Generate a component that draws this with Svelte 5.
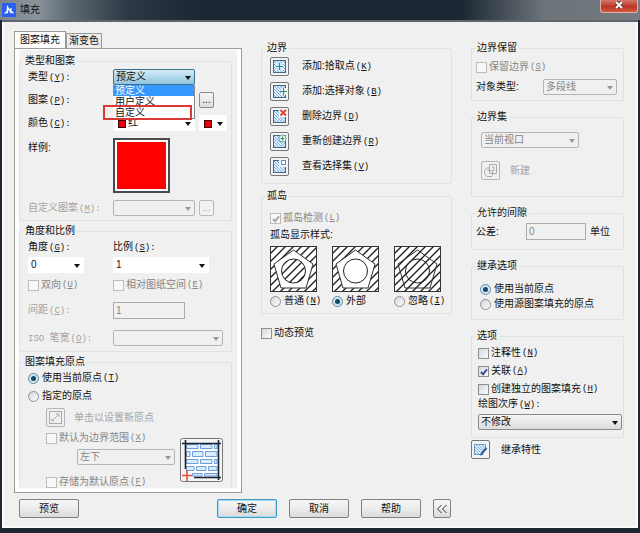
<script lang="ts">
  let patternType = $state('预定义')
  let preview = $state(false)
  let originMode = $state('current')
  let inheritMode = $state('current')
  let island = $state('outer')
  let drawOrder = $state('不修改')
  let annotative = $state(false)
  let associative = $state(true)
  let separate = $state(false)

  const patternTypes = ['预定义', '用户定义', '自定义']

  const boundaryTools = [
    { id: 'pick', label: '添加:拾取点', key: 'K' },
    { id: 'select', label: '添加:选择对象', key: 'B' },
    { id: 'remove', label: '删除边界', key: 'D' },
    { id: 'recreate', label: '重新创建边界', key: 'R' },
    { id: 'view', label: '查看选择集', key: 'V' },
  ]

  const islandStyles = [
    { id: 'normal', label: '普通', key: 'N' },
    { id: 'outer', label: '外部', key: '' },
    { id: 'ignore', label: '忽略', key: 'I' },
  ]
</script>

{#snippet key(k: string, colon = false)}<span class="key">(<u>{k}</u>){colon ? ':' : ''}</span>{/snippet}

<svg class="defs" width="0" height="0" aria-hidden="true">
  <defs>
    <pattern id="hatch" width="8" height="8" patternUnits="userSpaceOnUse">
      <path d="M-2 2L2 -2M-2 10L10 -2M6 10L10 6" stroke="#222" stroke-width="1.4" />
    </pattern>
    <pattern id="fine" width="3" height="3" patternUnits="userSpaceOnUse">
      <rect width="3" height="3" fill="#e2f0fc" />
      <path d="M0 0L3 3" stroke="#6fa3dc" stroke-width="0.9" />
    </pattern>
  </defs>
</svg>

<div class="window">
  <header class="titlebar">
    <svg class="logo" width="14" height="14" viewBox="0 0 14 14">
      <rect width="14" height="14" rx="1" fill="#2a5ff0" />
      <path d="M3 10L5.5 9.500V4L9 9.500L11.500 9.500M9 9V5" fill="none" stroke="#fff" stroke-width="1.300" />
      <path d="M2.500 10.500L5 7" stroke="#bcd0ff" />
    </svg>
    <h1>填充</h1>
    <button class="close" aria-label="关闭">
      <svg width="10" height="8" viewBox="0 0 10 8">
        <path d="M2 1L8 7M8 1L2 7" stroke="#5b2a26" stroke-width="3.400" />
        <path d="M2 1L8 7M8 1L2 7" stroke="#fff" stroke-width="2" />
      </svg>
    </button>
  </header>

  <div class="client">
    <main class="columns">
      <section class="left">
        <div class="tabs" role="tablist">
          <button class="tab active" role="tab" aria-selected="true">图案填充</button>
          <button class="tab" role="tab" aria-selected="false">渐变色</button>
        </div>
        <div class="page" role="tabpanel">
          <div class="sheet">
            <fieldset class="group pattern">
              <legend>类型和图案</legend>
              <div class="row">
                <label class="name" for="type">类型{@render key('Y', true)}</label>
                <div class="combo open w82">
                  <select id="type" bind:value={patternType}>
                    {#each patternTypes as t}<option>{t}</option>{/each}
                  </select>
                  <ul class="list">
                    {#each patternTypes as t}
                      <li class:chosen={t === patternType}>{t}</li>
                    {/each}
                  </ul>
                  <span class="mark"></span>
                </div>
              </div>
              <div class="row">
                <span class="name">图案{@render key('P', true)}</span>
                <div class="w82"></div>
                <button class="more" aria-label="图案">...</button>
              </div>
              <div class="row">
                <label class="name" for="color">颜色{@render key('C', true)}</label>
                <div class="combo plain chip w82">
                  <select id="color"><option>红</option></select>
                </div>
                <div class="combo plain chip w28">
                  <select aria-label="背景色"><option></option></select>
                </div>
              </div>
              <div class="row top">
                <span class="name sample">样例:</span>
                <button class="swatch" aria-label="样例"></button>
              </div>
              <div class="row">
                <label class="name dim" for="custom">自定义图案{@render key('M', true)}</label>
                <div class="combo w82">
                  <select id="custom" disabled><option></option></select>
                </div>
                <button class="more" disabled aria-label="自定义图案">...</button>
              </div>
            </fieldset>

            <fieldset class="group scale">
              <legend>角度和比例</legend>
              <div class="tight">
                <div class="pair">
                  <div class="field">
                    <label for="angle">角度{@render key('G', true)}</label>
                    <div class="combo plain w56">
                      <select id="angle"><option>0</option></select>
                    </div>
                  </div>
                  <div class="field">
                    <label for="ratio">比例{@render key('S', true)}</label>
                    <div class="combo plain w96">
                      <select id="ratio"><option>1</option></select>
                    </div>
                  </div>
                </div>
                <div class="pair">
                  <label class="check off"><input type="checkbox" disabled />双向{@render key('U')}</label>
                  <label class="check off"><input type="checkbox" disabled />相对图纸空间{@render key('E')}</label>
                </div>
              </div>
              <div class="row">
                <label class="name dim" for="spacing">间距{@render key('C', true)}</label>
                <input class="text w72" id="spacing" value="1" disabled />
              </div>
              <div class="row">
                <label class="name dim" for="iso"><span class="mono">ISO{' '}</span>笔宽{@render key('O', true)}</label>
                <div class="combo w110">
                  <select id="iso" disabled><option></option></select>
                </div>
              </div>
            </fieldset>

            <fieldset class="group origin">
              <legend>图案填充原点</legend>
              <label class="check"><input type="radio" value="current" bind:group={originMode} />使用当前原点{@render key('T')}</label>
              <label class="check"><input type="radio" value="custom" bind:group={originMode} />指定的原点</label>
              <div class="sub">
                <div class="substack">
                  <div class="tool dim">
                    <button class="icon" id="setorigin" disabled aria-label="设置新原点">
                      <svg width="13" height="13" viewBox="0 0 13 13" fill="none" stroke="#aaa">
                        <rect x="0.500" y="0.500" width="12" height="12" />
                        <path d="M3 10L10 3M7 3H10V6M2 8L5 11M3 10V8" />
                      </svg>
                    </button>
                    <label for="setorigin">单击以设置新原点</label>
                  </div>
                  <label class="check off"><input type="checkbox" disabled />默认为边界范围{@render key('X')}</label>
                  <div class="combo corner w98">
                    <select disabled aria-label="边界范围"><option>左下</option></select>
                  </div>
                  <label class="check off store"><input type="checkbox" disabled />存储为默认原点{@render key('F')}</label>
                </div>
                <svg class="bricks" width="43" height="44" viewBox="0 0 43 44">
                  <rect x="0.500" y="0.500" width="42" height="43" rx="2" fill="#f4f4f4" stroke="#777" />
                  <rect x="6" y="6" width="31" height="32" fill="#fff" />
                  <g fill="#dcebfa" stroke="#6b9ede">
                    <path d="M6.500 6.500H18V10.500H6.500ZM20.500 6.500H32V10.500H20.500ZM34.500 6.500H37V10.500H34.500Z" />
                    <path d="M6.500 13.500H10V18.500H6.500ZM12.500 13.500H23V18.500H12.500ZM25.500 13.500H37V18.500H25.500Z" />
                    <path d="M6.500 21.500H18V25.500H6.500ZM20.500 21.500H32V25.500H20.500ZM34.500 21.500H37V25.500H34.500Z" />
                    <path d="M6.500 28.500H14V32.500H6.500ZM16.500 28.500H26V32.500H16.500ZM28.500 28.500H37V32.500H28.500Z" />
                    <path d="M12.500 35.500H22V38H12.500ZM24.500 35.500H37V38H24.500Z" />
                  </g>
                  <path d="M2 5.500H41M5.500 2V31M38.500 2V42M14 39.500H41" stroke="#1d2230" stroke-width="1.600" />
                  <path d="M7 32V43M2 37.500H12" stroke="#e0503a" stroke-width="1.600" />
                </svg>
              </div>
            </fieldset>
          </div>
        </div>
      </section>

      <section class="middle">
        <fieldset class="group boundary">
          <legend>边界</legend>
          {#each boundaryTools as tool}
            <div class="tool">
              <button class="icon" id={tool.id} aria-label={tool.label}>
                <svg width="15" height="15" viewBox="0 0 15 15" fill="none">
                  <rect x="1.500" y="1.500" width="12" height="12" fill="url(#fine)" stroke="#44667f" />
                  {#if tool.id === 'pick'}
                    <rect x="4" y="4" width="7" height="7" fill="#d8ebfa" />
                    <path d="M7.500 4V11M4 7.500H11" stroke="#2a9578" stroke-width="1.200" />
                  {:else if tool.id === 'select'}
                    <rect x="9" y="4" width="6" height="7" fill="#f2f4f5" />
                    <path d="M11.500 4V11M8 7.500H15" stroke="#2a9578" stroke-width="1.200" />
                  {:else if tool.id === 'remove'}
                    <rect x="7" y="0" width="8" height="8" fill="#f2f4f5" />
                    <path d="M8.500 1L14 6.500M14 1L8.500 6.500" stroke="#dd4030" stroke-width="1.800" />
                  {:else if tool.id === 'recreate'}
                    <circle cx="10.500" cy="4.500" r="3.500" fill="#eef6f2" stroke="#69af90" />
                    <path d="M10.500 2.500V6.500M8.500 4.500H12.500" stroke="#2a9578" />
                  {:else}
                    <rect x="7" y="0" width="8" height="8" fill="#f2f4f5" />
                    <rect x="9.500" y="1.500" width="4" height="4" fill="#fff" stroke="#5a8fd8" />
                  {/if}
                </svg>
              </button>
              <label for={tool.id}>{tool.label}{@render key(tool.key)}</label>
            </div>
          {/each}
        </fieldset>

        <fieldset class="group islands">
          <legend>孤岛</legend>
          <label class="check off"><input type="checkbox" checked disabled />孤岛检测{@render key('L')}</label>
          <span class="caption">孤岛显示样式:</span>
          <div class="styles">
            {#each islandStyles as s}
              <label class="style">
                <svg width="47" height="46" viewBox="0 0 47 46">
                  <rect x="0.500" y="0.500" width="46" height="45" fill="#fff" />
                  <rect x="0.500" y="0.500" width="46" height="45" fill="url(#hatch)" stroke="#333" />
                  <path
                    d="M23.500 4L43 18L36 42H11L4 18Z"
                    fill={s.id === 'ignore' ? 'none' : '#fff'}
                    stroke="#333"
                  />
                  <circle
                    cx="23.500" cy="25" r="12"
                    fill={s.id === 'normal' ? 'url(#hatch)' : s.id === 'outer' ? '#fff' : 'none'}
                    stroke="#222"
                  />
                </svg>
                <span class="check">
                  <input type="radio" value={s.id} bind:group={island} />{s.label}{#if s.key}{@render key(s.key)}{/if}
                </span>
              </label>
            {/each}
          </div>
        </fieldset>

        <label class="check dynamic"><input type="checkbox" bind:checked={preview} />动态预览</label>
      </section>

      <section class="right">
        <fieldset class="group retain">
          <legend>边界保留</legend>
          <label class="check off"><input type="checkbox" disabled />保留边界{@render key('S')}</label>
          <div class="row">
            <label class="name" for="objtype">对象类型:</label>
            <div class="combo w74">
              <select id="objtype" disabled><option>多段线</option></select>
            </div>
          </div>
        </fieldset>

        <fieldset class="group bset">
          <legend>边界集</legend>
          <div class="combo w98">
            <select disabled aria-label="边界集"><option>当前视口</option></select>
          </div>
          <div class="tool dim">
            <button class="icon" id="newset" disabled aria-label="新建">
              <svg width="15" height="15" viewBox="0 0 15 15" fill="none" stroke="#aaa">
                <path d="M6 5H4Q1.500 6 1.500 9T4 13.500H9M6.500 1.500H13.500V10.500H6.500ZM4.500 7.500H9.500V12.500M9 4H11V8" />
              </svg>
            </button>
            <label for="newset">新建</label>
          </div>
        </fieldset>

        <fieldset class="group gap">
          <legend>允许的间隙</legend>
          <div class="row">
            <label class="name" for="tolerance">公差:</label>
            <input class="text w60" id="tolerance" value="0" disabled />
            <span class="suffix">单位</span>
          </div>
        </fieldset>

        <fieldset class="group inherit">
          <legend>继承选项</legend>
          <label class="check"><input type="radio" value="current" bind:group={inheritMode} />使用当前原点</label>
          <label class="check"><input type="radio" value="source" bind:group={inheritMode} />使用源图案填充的原点</label>
        </fieldset>

        <div class="last">
          <fieldset class="group options">
            <legend>选项</legend>
            <label class="check"><input type="checkbox" bind:checked={annotative} />注释性{@render key('N')}</label>
            <label class="check"><input type="checkbox" bind:checked={associative} />关联{@render key('A')}</label>
            <label class="check"><input type="checkbox" bind:checked={separate} />创建独立的图案填充{@render key('H')}</label>
            <div class="field">
              <label for="order">绘图次序{@render key('W', true)}</label>
              <div class="combo raised">
                <select id="order" bind:value={drawOrder}><option>不修改</option></select>
              </div>
            </div>
          </fieldset>
          <div class="tool">
            <button class="icon" id="inherit" aria-label="继承特性">
              <svg width="15" height="15" viewBox="0 0 15 15" fill="none">
                <path d="M1.500 2.500H12.500V8L8 12.500H1.500Z" fill="url(#fine)" stroke="#6d9bcb" />
                <path d="M13.500 6L9 11" stroke="#2f5c96" stroke-width="2" />
                <path d="M9.500 10Q8 10 7 13.500Q10 13.500 10.500 11.500Z" fill="#2f5c96" />
              </svg>
            </button>
            <label for="inherit">继承特性</label>
          </div>
        </div>
      </section>
    </main>

    <footer class="actions">
      <button class="push first">预览</button>
      <button class="push default">确定</button>
      <button class="push">取消</button>
      <button class="push">帮助</button>
      <button class="push fold" aria-label="收起">
        <svg width="12" height="10" viewBox="0 0 12 10" fill="none" stroke="#333">
          <path d="M5.500 1L1.500 5L5.500 9M10.500 1L6.500 5L10.500 9" />
        </svg>
      </button>
    </footer>
  </div>
</div>

<style>
  :global(body) {
    margin: 0;
    background: #1d2733;
  }

  .window,
  .window button,
  .window input,
  .window select {
    font-family: 'Liberation Sans', 'Noto Sans CJK SC', sans-serif;
    font-size: 10px;
    line-height: 12px;
    color: #111;
  }

  .window {
    background: #1d2733;
    padding: 0 2px 5px;
    border-bottom: 1px solid #c8ccd0;
  }

  .window *,
  .window *::before,
  .window *::after {
    box-sizing: border-box;
  }

  .defs {
    position: absolute;
  }

  .titlebar {
    display: flex;
    align-items: center;
    gap: 4px;
    height: 20px;
    margin: 0 -2px;
    padding: 0 2px;
    background: linear-gradient(90deg, #7d868e 0, #8b949b 36px, #5d6871 70px, #2b3743 130px, #1d2733 200px, #1d2733 72%, #3b454f 77%, #6c7379 85%, #757b80 100%);
  }

  h1 {
    margin: 0;
    font-size: 10px;
    font-weight: normal;
  }

  .close {
    align-self: flex-start;
    display: grid;
    place-items: center;
    width: 38px;
    height: 13px;
    margin-left: auto;
    padding: 0 0 3px;
    border: 1px solid #e2b2aa;
    border-top: 0;
    border-radius: 0 0 3px 3px;
    background: linear-gradient(#d07a6c, #bb3424 55%, #d35a42);
  }

  .client {
    background: #f0f0f0;
    border-top: 2px solid #5e666d;
    box-shadow: inset 2px 0 0 #fafafa, inset -2px 0 0 #fafafa, inset 0 -2px 0 #fafafa;
    padding: 9px 14px 10px 12px;
  }

  .columns {
    display: grid;
    grid-template-columns: minmax(0, 228fr) minmax(0, 191fr) minmax(0, 153fr);
    gap: 19px;
  }

  .middle,
  .right {
    display: flex;
    flex-direction: column;
    padding-top: 11px;
  }

  .middle {
    gap: 6px;
  }

  .right {
    gap: 10px;
  }

  .tabs {
    display: flex;
    align-items: flex-end;
  }

  .tab {
    height: 15px;
    padding: 0 2px;
    border: 1px solid #9a9a9a;
    border-bottom: 0;
    background: #ececec;
  }

  .tab.active {
    height: 17px;
    padding: 0 5px;
    background: #fff;
  }

  .page {
    border: 1px solid #9a9a9a;
    background: #fff;
    padding: 1px 4px 4px;
  }

  .sheet {
    display: flex;
    flex-direction: column;
    gap: 4px;
    padding: 5px 5px 0 0;
    background: #f0f0f0;
  }

  .group {
    --inset: 8px;
    display: flex;
    flex-direction: column;
    min-width: 0;
    margin: 0;
    padding: 0 var(--inset);
    border: 1px solid #dde2e6;
    border-radius: 2px;
  }

  legend {
    margin-left: calc(3px - var(--inset));
    padding: 0 2px;
    line-height: 12px;
  }

  .key,
  .mono {
    font-family: 'Liberation Mono', monospace;
    font-size: 9px;
    white-space: pre;
  }

  .key {
    margin-left: 1px;
  }

  label,
  .check,
  .name,
  .caption,
  .suffix {
    white-space: nowrap;
  }

  .row,
  .tool {
    display: flex;
    align-items: center;
  }

  .row {
    gap: 4px;
    min-height: 16px;
  }

  .row.top {
    align-items: flex-start;
  }

  .name {
    flex: none;
    width: 81px;
  }

  .sample {
    padding-top: 4px;
  }

  .tool {
    gap: 13px;
  }

  .dim {
    color: #a3a3a3;
  }

  .check {
    display: flex;
    align-items: center;
    height: 12px;
  }

  .off {
    color: #858585;
  }

  .check input {
    appearance: none;
    flex: none;
    display: grid;
    place-items: center;
    width: 11px;
    height: 11px;
    margin: 0 2px 0 0;
    border: 1px solid #8f8f8f;
    background: linear-gradient(135deg, #d4d8dc, #fbfbfb);
  }

  .check input:disabled {
    border-color: #bcbcbc;
    background: #f8f8f8;
  }

  .check input[type='radio'] {
    margin-right: 3px;
    border-radius: 50%;
  }

  .check input[type='checkbox']:checked::before {
    content: '';
    width: 4px;
    height: 7px;
    border: solid #3a4f96;
    border-width: 0 2px 2px 0;
    transform: rotate(40deg);
  }

  .check input[type='checkbox']:disabled:checked::before {
    border-color: #aaa;
  }

  .check input[type='radio']:checked {
    border-color: #5f8ba5;
    background: #cfe6f2;
  }

  .check input[type='radio']:checked::before {
    content: '';
    width: 5px;
    height: 5px;
    border-radius: 50%;
    background: #174a66;
  }

  .combo {
    position: relative;
    flex: none;
    height: 16px;
  }

  .combo::after {
    content: '';
    position: absolute;
    right: 4px;
    top: 7px;
    border: 3px solid transparent;
    border-top: 4px solid #111;
    border-bottom: 0;
    pointer-events: none;
  }

  .combo:has(select:disabled)::after {
    border-top-color: #999;
  }

  select {
    appearance: none;
    display: block;
    width: 100%;
    height: 100%;
    margin: 0;
    padding: 0 2px;
    border: 1px solid #8a8a8a;
    border-radius: 2px;
    background: #f0f0f0;
  }

  .window select:disabled {
    border-color: #b4b4b4;
    color: #858585;
    opacity: 1;
  }

  .plain select {
    border-color: #fff;
    border-radius: 0;
    background: #fff;
  }

  .raised select {
    background: linear-gradient(#f4f4f4, #dcdcdc);
  }

  .open select {
    border-color: #3c6f8c;
    background: linear-gradient(#d5ecf7, #8dc4de);
  }

  .chip select {
    padding-left: 14px;
  }

  .chip::before {
    content: '';
    position: absolute;
    left: 5px;
    top: 5px;
    width: 8px;
    height: 8px;
    border: 1px solid #400;
    background: #e60012;
  }

  .list {
    position: absolute;
    z-index: 1;
    top: 16px;
    left: 0;
    right: 0;
    margin: 0;
    padding: 0;
    border-right: 1px solid #888;
    border-bottom: 1px solid #888;
    background: #fff;
    list-style: none;
  }

  .list li {
    height: 11px;
    padding-left: 2px;
    line-height: 11px;
  }

  .list .chosen {
    background: #3399ff;
    color: #fff;
  }

  .mark {
    position: absolute;
    z-index: 2;
    top: 36px;
    left: -10px;
    width: 89px;
    height: 15px;
    border: 2px solid #d93a35;
  }

  .more {
    flex: none;
    width: 15px;
    height: 16px;
    padding: 0;
    border: 1px solid #8a8a8a;
    border-radius: 2px;
    background: linear-gradient(#f6f6f6, #dcdcdc);
  }

  .window .more:disabled {
    border-color: #bbb;
    background: #f2f2f2;
    color: #aaa;
  }

  .swatch {
    width: 57px;
    height: 55px;
    padding: 0;
    border: 2px solid #4a4a4a;
    background: #f00;
    box-shadow: inset 0 0 0 2px #fff;
  }

  .text {
    height: 17px;
    padding: 0 2px;
    border: 1px solid #aaa;
    background: #f0f0f0;
  }

  .window .text:disabled {
    color: #858585;
  }

  .icon {
    flex: none;
    display: grid;
    place-items: center;
    width: 19px;
    height: 19px;
    padding: 0;
    border: 1px solid #777;
    border-radius: 2px;
    background: #f2f4f5;
  }

  .icon:disabled {
    border-color: #b4b4b4;
    background: #f0f0f0;
  }

  .w28 { width: 28px; }
  .w56 { width: 56px; }
  .w60 { width: 60px; }
  .w72 { width: 72px; }
  .w74 { width: 74px; }
  .w82 { width: 82px; }
  .w96 { width: 96px; }
  .w98 { width: 98px; }
  .w110 { width: 110px; }

  .pattern {
    gap: 7px;
    padding-top: 2px;
    padding-bottom: 4px;
  }

  .scale {
    gap: 11px;
    padding-top: 4px;
    padding-bottom: 5px;
  }

  .tight {
    display: flex;
    flex-direction: column;
    gap: 6px;
  }

  .pair {
    display: grid;
    grid-template-columns: 85px 1fr;
  }

  .field {
    display: flex;
    flex-direction: column;
    gap: 3px;
  }

  .origin {
    gap: 6px;
    padding-top: 4px;
    border-bottom: 0;
  }

  .sub {
    display: flex;
    justify-content: space-between;
    padding-left: 18px;
  }

  .substack {
    display: flex;
    flex-direction: column;
    gap: 5px;
  }

  .substack .tool {
    gap: 9px;
  }

  .corner {
    margin-left: 31px;
  }

  .store {
    margin-top: 6px;
  }

  .bricks {
    flex: none;
    align-self: flex-end;
    margin-bottom: 6px;
  }

  .boundary {
    gap: 6px;
    padding-top: 3px;
    padding-bottom: 7px;
  }

  .islands {
    gap: 5px;
    padding-top: 10px;
    padding-bottom: 6px;
  }

  .styles {
    display: flex;
    gap: 15px;
  }

  .style {
    flex: none;
    display: flex;
    flex-direction: column;
    gap: 3px;
    width: 47px;
  }

  .dynamic {
    margin-top: 7px;
  }

  .retain {
    --inset: 4px;
    gap: 6px;
    padding-top: 7px;
    padding-bottom: 5px;
  }

  .retain .name {
    width: 63px;
  }

  .bset {
    --inset: 9px;
    gap: 13px;
    padding-top: 9px;
    padding-bottom: 16px;
  }

  .bset .tool {
    gap: 10px;
  }

  .gap {
    --inset: 4px;
    padding-top: 4px;
    padding-bottom: 9px;
  }

  .gap .name {
    width: 46px;
  }

  .inherit {
    gap: 3px;
    padding-top: 11px;
    padding-bottom: 9px;
  }

  .options {
    --inset: 6px;
    gap: 6px;
    padding-top: 5px;
    padding-right: 1px;
    padding-bottom: 7px;
  }

  .options .field {
    margin-top: -3px;
  }

  .last {
    display: flex;
    flex-direction: column;
    gap: 2px;
  }

  .last > .tool {
    gap: 11px;
  }

  .actions {
    display: flex;
    gap: 12px;
    padding: 6px 0 0 5px;
  }

  .push {
    display: grid;
    place-items: center;
    width: 60px;
    height: 19px;
    padding: 0;
    border: 1px solid #808080;
    border-radius: 2px;
    background: linear-gradient(#f6f6f6, #ececec 50%, #dadada);
  }

  .first {
    margin-right: 126px;
  }

  .default {
    border-color: #3a9cc4;
    box-shadow: inset 0 0 0 1px #a8dcf0;
  }

  .fold {
    width: 18px;
  }
</style>
